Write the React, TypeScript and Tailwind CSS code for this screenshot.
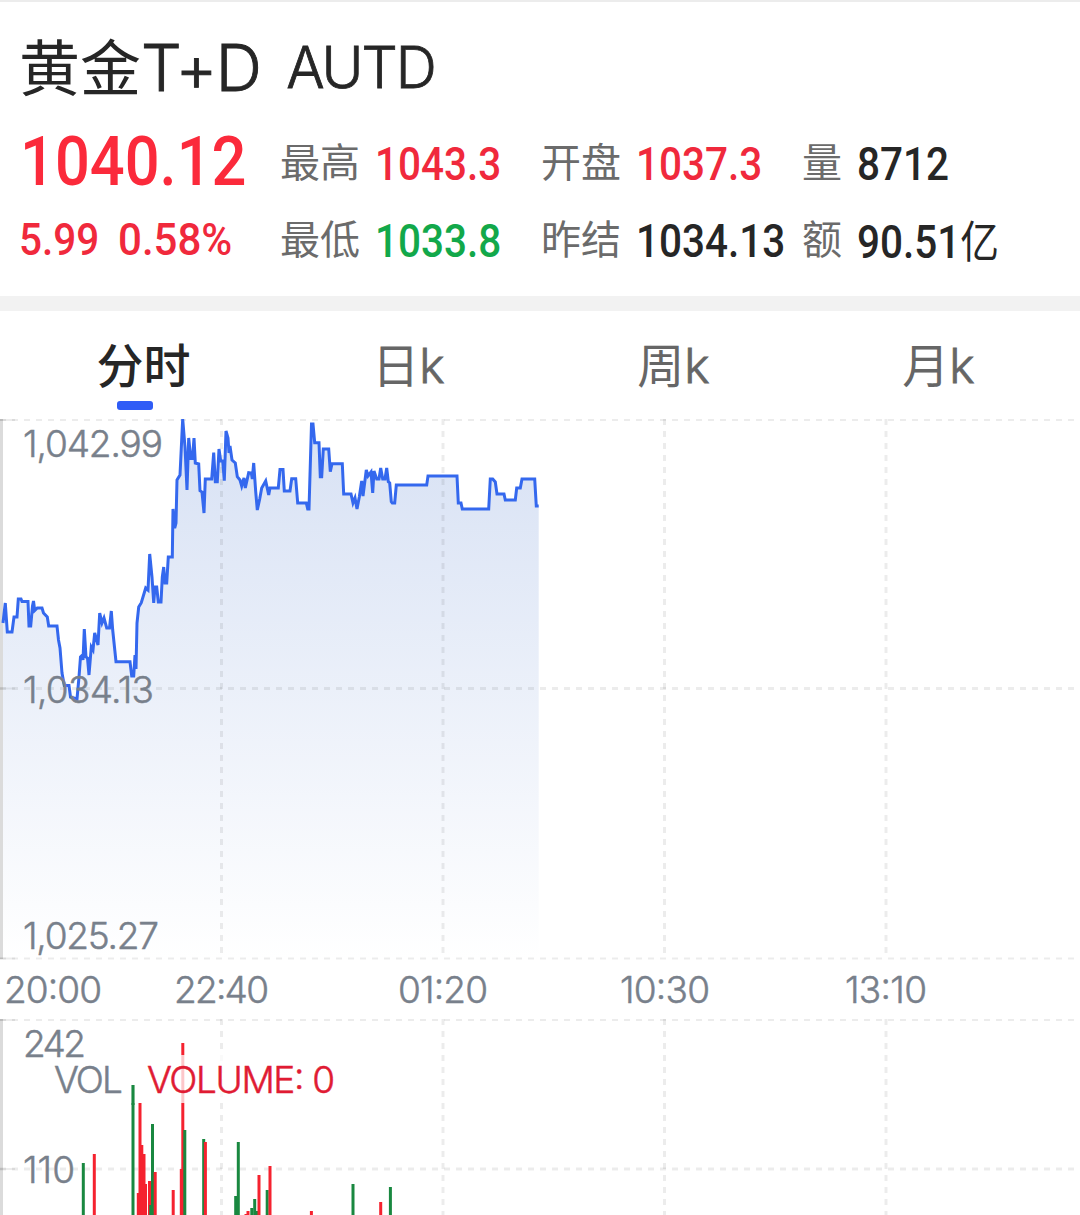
import type { ReactNode } from "react";

const PRICE_LINE =
  "3,204 5.3,184 7.3,213 12,213 14,198 17,198 18.3,180 21,180 22,182.5 28,182.5 29,207 30.7,207 32.5,187 33.5,182 34.7,191.5 37.3,189 42,189 43.5,194 47.3,198 48.7,207 57,207 58.5,221 60,229 62,254 64.3,266.5 69,266.5 70.5,278 77,280 79,258 80.5,238 82.5,236 83,241 84.3,210 86,238 87.5,239 89,256 91.3,228 93,231 94.7,214 98,226 99.7,194 102,204 104,199 106.7,209 109.5,209 111.3,192 112.7,211 116,242.7 130,242.7 131.7,257 133.7,257 135,236 136,250 137,204 138.7,188 141.3,183.7 145.7,169 148,171 149.7,135 152,158 153.7,184 155,168 156.7,168 158.3,183 161,183 162.3,158 163.7,148 165,164 166.7,164 168.3,138 172.3,138 173,90 174.7,109 176,104 177,61 180,56 182.7,0 185,28 187,71 188.7,19 190.7,39.5 192.5,39.5 194,19 195.3,44 198.7,45 200,71.7 202,73 204,94 205.3,60 211.7,60 213.7,33.7 215.3,62.7 217.3,62.7 219,30 220.7,42 222.7,42 224.3,61.7 226,12 228,19 229,34 230,27 232,41 235.3,44 237.3,57.7 240,61 241.7,67 244,59 245.3,69 248.7,53.7 251.3,54 252.3,60 253.7,44 255.7,72.7 257.3,91 259.7,80 261.7,69 265.7,62 268.7,76 270,69 278.3,69 280,50.5 283,50.5 284.3,72 290,72 291.7,59.7 295.7,59.7 297.7,84 306.3,84 307.7,90 309,90 311.5,5 313,5 314.7,23.7 319,23.7 320.3,57.7 321.7,57.7 323.3,30 328.7,30 330.3,52.7 332,44.7 342.3,44.7 343.7,75 351,75 353,84 355,79 357,90 359.3,78 361.7,62 363,77 366.3,51 368,57 371,53 372.7,74 374,52 376.7,60 379,60 380.7,49 382.7,60 385,60 386.7,49 388.3,62.7 389.7,64 391.3,82.7 392.3,84 394.7,84 396.3,66 426.7,66 428,57 457,57 458.3,84 461,84 462.3,90 488.7,90 490.3,60 492.7,60 495.3,63 497,75 504,75 505.3,81 515.3,81 516.7,69 520.3,69 522,60 534.7,60 536.3,87 538.7,87";

const GRID_X = [221.5, 443, 664.5, 886];

const RED = "#f5222f";
const GREEN = "#198840";

// x centre, top, colour
const BARS: [number, number, string][] = [
  [83.3, 144, GREEN],
  [94.3, 135, RED],
  [133, 66, GREEN],
  [138.3, 174, RED],
  [140, 84, RED],
  [141.8, 126, RED],
  [144, 135, RED],
  [145.5, 165, RED],
  [149.5, 162, RED],
  [150.8, 186, GREEN],
  [152.5, 105, GREEN],
  [155.2, 153, RED],
  [173.2, 171, RED],
  [181.3, 150, RED],
  [182.8, 24, RED],
  [184.8, 111, GREEN],
  [203.7, 120, GREEN],
  [205.4, 123, RED],
  [235.7, 177, GREEN],
  [238.3, 123, GREEN],
  [246, 195, RED],
  [248, 192, RED],
  [251.8, 189, GREEN],
  [254.7, 180, GREEN],
  [257, 192, GREEN],
  [259, 156, RED],
  [267.2, 171, GREEN],
  [270, 147, RED],
  [311.4, 192, RED],
  [353, 165, GREEN],
  [380.7, 183, RED],
  [390.4, 168, GREEN],
];

interface LabelProps {
  x: number;
  y: number;
  width: number;
  color?: string;
  children: ReactNode;
}

function Label({ x, y, width, color = "#78808b", children }: LabelProps) {
  return (
    <text
      x={x}
      y={y}
      fill={color}
      stroke={color}
      strokeWidth={0.5}
      textLength={width}
      className="font-['Inter','Liberation_Sans',sans-serif] text-[37px] font-light"
    >
      {children}
    </text>
  );
}

function Grid({ height, rows }: { height: number; rows: number[] }) {
  return (
    <g stroke="#000" strokeOpacity={0.075}>
      {rows.map((y) => (
        <g key={y}>
          <line x1={0} x2={1080} y1={y} y2={y} strokeWidth={y === rows[1] ? 3 : 2} strokeDasharray="6 6" />
          <line x1={0} x2={15} y1={y} y2={y} strokeWidth={2} />
        </g>
      ))}
      {GRID_X.map((x) => (
        <line key={x} x1={x} x2={x} y1={0} y2={height} strokeWidth={3} strokeDasharray="6 6" />
      ))}
      <line x1={1.5} x2={1.5} y1={0} y2={height} strokeWidth={3} strokeOpacity={0.14} />
    </g>
  );
}

interface StatProps {
  label: string;
  value: string;
  unit?: string;
  color: string;
  width: string;
}

function Stat({ label, value, unit, color, width }: StatProps) {
  return (
    <div className={`flex h-[60px] items-center ${width}`}>
      <span className="mr-[15px] shrink-0 pb-[5px] text-[40px] text-[#6b6b6b]">{label}</span>
      <span
        className={`origin-left scale-x-[0.88] whitespace-nowrap pt-[5px] font-['Roboto','Noto_Sans_CJK_SC',sans-serif] text-[46px] font-medium ${color}`}
      >
        {value}
        {unit && <span className="font-['Noto_Sans_CJK_SC',sans-serif] text-[44px] font-normal">{unit}</span>}
      </span>
    </div>
  );
}

function Tab({ label, suffix, active = false }: { label: string; suffix?: string; active?: boolean }) {
  return (
    <div className="flex h-full w-[265px] flex-col items-center">
      <span
        className={`mt-[17px] h-[73px] text-[47px] leading-[70px] ${
          active ? "font-medium text-[#262626]" : "font-normal text-[#666]"
        }`}
      >
        {label}
        {suffix && (
          <span className="font-['Inter',sans-serif] text-[48px] font-light [-webkit-text-stroke:0.8px]">{suffix}</span>
        )}
      </span>
      {active && <div className="-ml-[17px] h-[9px] w-9 rounded-[3px] bg-[#2f5cf6]" />}
    </div>
  );
}

export default function App() {
  return (
    <div className="h-[1215px] w-[1080px] overflow-hidden bg-white font-['Noto_Sans_CJK_SC',sans-serif] text-[#262626]">
      <header className="h-[296px] border-t-2 border-[#ececec] pl-[19px]">
        <div className="flex h-[124px] items-center">
          <h1 className="flex items-center text-[61px] font-normal leading-none">
            黄金
            <span className="pt-[8px] font-['Inter',sans-serif] text-[64px] font-light tracking-[-1.5px] [-webkit-text-stroke:0.9px]">
              T+D
            </span>
          </h1>
          <span className="ml-[26px] pt-[8px] font-['Inter',sans-serif] text-[57px] font-light tracking-[-2px] [-webkit-text-stroke:0.8px]">
            AUTD
          </span>
        </div>
        <div className="flex">
          <div className="w-[261px] font-['Roboto',sans-serif] font-medium text-[#fb2a3b]">
            <div className="flex h-[78px] items-center pb-[7px] pl-[1px]">
              <span className="origin-left scale-x-[0.89] text-[69px] leading-none">1040.12</span>
            </div>
            <div className="flex h-[72px] items-center text-[#f0293c]">
              <span className="w-[99px] origin-left scale-x-[0.92] text-[44px]">5.99</span>
              <span className="origin-left scale-x-[0.955] text-[44px]">0.58%</span>
            </div>
          </div>
          <div className="flex flex-col pt-1.5">
            <div className="flex h-[77px]">
              <Stat label="最高" value="1043.3" color="text-[#f0293c]" width="w-[261px]" />
              <Stat label="开盘" value="1037.3" color="text-[#f0293c]" width="w-[261px]" />
              <Stat label="量" value="8712" color="text-[#262626]" width="w-[240px]" />
            </div>
            <div className="flex">
              <Stat label="最低" value="1033.8" color="text-[#12a84a]" width="w-[261px]" />
              <Stat label="昨结" value="1034.13" color="text-[#262626]" width="w-[261px]" />
              <Stat label="额" value="90.51" unit="亿" color="text-[#262626]" width="w-[240px]" />
            </div>
          </div>
        </div>
      </header>

      <div className="h-[15px] bg-[#f2f2f2]" />

      <nav className="flex h-[108px] pl-[11px]">
        <Tab label="分时" active />
        <Tab label="日" suffix="k" />
        <Tab label="周" suffix="k" />
        <Tab label="月" suffix="k" />
      </nav>

      <svg className="block" width={1080} height={541} viewBox="0 0 1080 541">
        <defs>
          <linearGradient id="area" gradientUnits="userSpaceOnUse" x1="0" y1="0" x2="0" y2="540">
            <stop offset="0" stopColor="#d7e1f4" />
            <stop offset="1" stopColor="#ffffff" />
          </linearGradient>
        </defs>
        <polygon points={`3,540 ${PRICE_LINE} 538.7,540`} fill="url(#area)" />
        <Grid height={540} rows={[1, 269.5, 539.5]} />
        <polyline points={PRICE_LINE} fill="none" stroke="#3468ee" strokeWidth={3} />
        <Label x={23} y={38} width={140}>1,042.99</Label>
        <Label x={23} y={284} width={131}>1,034.13</Label>
        <Label x={23} y={530} width={136}>1,025.27</Label>
      </svg>

      <svg className="block" width={1080} height={59} viewBox="0 0 1080 59">
        <Label x={4} y={43} width={98}>20:00</Label>
        <Label x={174} y={43} width={95}>22:40</Label>
        <Label x={398} y={43} width={90}>01:20</Label>
        <Label x={620} y={43} width={90}>10:30</Label>
        <Label x={845} y={43} width={82}>13:10</Label>
      </svg>

      <svg className="block" width={1080} height={196} viewBox="0 0 1080 196">
        <Grid height={196} rows={[1, 150]} />
        {BARS.map(([x, top, color]) => (
          <rect key={x} x={x - 1.5} y={top} width={3} height={196 - top} fill={color} />
        ))}
        <rect x={48} y={36} width={290} height={48} fill="#fff" fillOpacity={0.75} />
        <rect x={131.5} y={66} width={3} height={20} fill={GREEN} />
        <Label x={23} y={38} width={63}>242</Label>
        <Label x={23} y={164} width={52}>110</Label>
        <Label x={54} y={74} width={69}>VOL</Label>
        <Label x={147} y={74} width={188} color="#e01b33">VOLUME: 0</Label>
      </svg>
    </div>
  );
}
